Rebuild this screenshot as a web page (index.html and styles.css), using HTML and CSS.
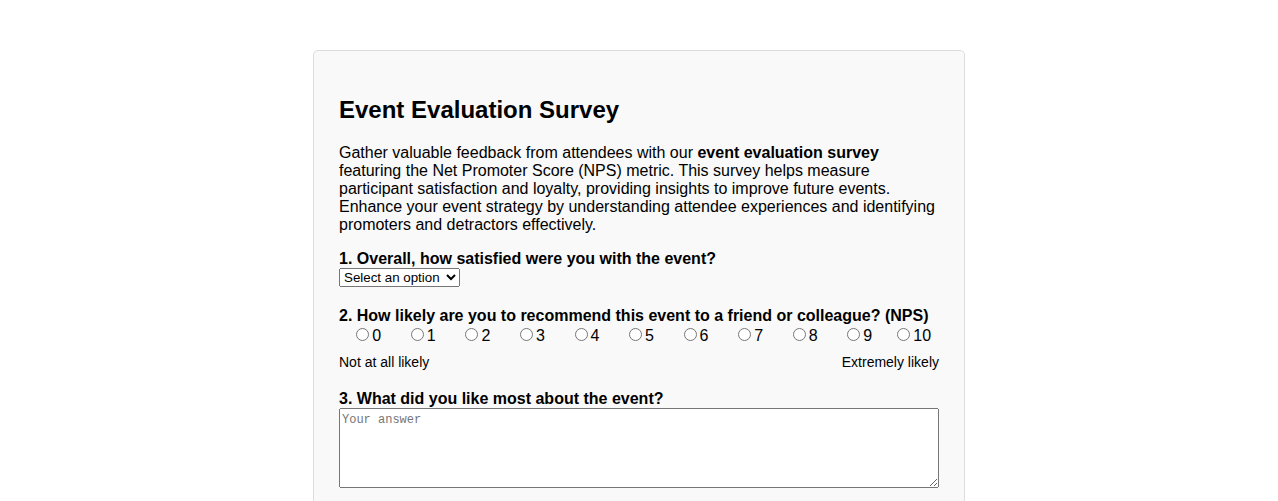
FILE: index.html
```html
<!DOCTYPE html>
<html lang="en">
<head>
<meta charset="utf-8">
<title>Event Evaluation Survey</title>
<link rel="stylesheet" href="styles.css">
</head>
<body>
<div class="container">
  <h2 class="title">Event Evaluation Survey</h2>
  <p class="intro">Gather valuable feedback from attendees with our <strong>event evaluation survey</strong> featuring the Net Promoter Score (NPS) metric. This survey helps measure participant satisfaction and loyalty, providing insights to improve future events. Enhance your event strategy by understanding attendee experiences and identifying promoters and detractors effectively.</p>
  <form>
    <div class="question">
      <label class="q-label" for="q1">1. Overall, how satisfied were you with the event?</label>
      <select id="q1" name="q1" class="q-select">
        <option>Select an option</option>
        <option>Very satisfied</option>
        <option>Satisfied</option>
        <option>Neutral</option>
        <option>Dissatisfied</option>
        <option>Very dissatisfied</option>
      </select>
    </div>
    <div class="question">
      <label class="q-label">2. How likely are you to recommend this event to a friend or colleague? (NPS)</label>
      <div class="nps">
        <label class="nps-item"><input type="radio" name="nps" value="0">0</label>
        <label class="nps-item"><input type="radio" name="nps" value="1">1</label>
        <label class="nps-item"><input type="radio" name="nps" value="2">2</label>
        <label class="nps-item"><input type="radio" name="nps" value="3">3</label>
        <label class="nps-item"><input type="radio" name="nps" value="4">4</label>
        <label class="nps-item"><input type="radio" name="nps" value="5">5</label>
        <label class="nps-item"><input type="radio" name="nps" value="6">6</label>
        <label class="nps-item"><input type="radio" name="nps" value="7">7</label>
        <label class="nps-item"><input type="radio" name="nps" value="8">8</label>
        <label class="nps-item"><input type="radio" name="nps" value="9">9</label>
        <label class="nps-item"><input type="radio" name="nps" value="10">10</label>
      </div>
      <div class="nps-scale">
        <span>Not at all likely</span>
        <span>Extremely likely</span>
      </div>
    </div>
    <div class="question">
      <label class="q-label" for="q3">3. What did you like most about the event?</label>
      <textarea id="q3" name="q3" class="q-text" placeholder="Your answer"></textarea>
    </div>
  </form>
</div>
</body>
</html>
```
FILE: styles.css
```css
html, body {
  margin: 0;
  padding: 0;
  background: #ffffff;
}

body {
  font-family: "Liberation Sans", Arial, sans-serif;
  color: #000000;
}

.container {
  width: 600px;
  margin: 50px auto 0;
  padding: 25px;
  background: #f9f9f9;
  border: 1px solid #dddddd;
  border-radius: 5px;
}

.title {
  font-size: 24px;
  font-weight: bold;
  margin: 20px 0;
}

.intro {
  font-size: 16px;
  margin: 0 0 16px;
}

.question {
  margin-bottom: 20px;
}

.q-label {
  display: block;
  font-weight: bold;
  font-size: 16px;
}

.q-select {
  font-family: "Liberation Sans", Arial, sans-serif;
  font-size: 13.33px;
  height: 19px;
  padding-right: 2px;
}

.nps {
  display: flex;
}

.nps-item {
  flex: 1;
  text-align: center;
  font-size: 16px;
}

.nps-scale {
  display: flex;
  justify-content: space-between;
  font-size: 14px;
  margin-top: 9px;
}

.q-text {
  display: block;
  width: 100%;
  height: 80px;
  box-sizing: border-box;
  font-family: "Liberation Mono", "Courier New", monospace;
  font-size: 12px;
  padding: 4px 2px 2px;
}

.q-text::placeholder {
  color: #757575;
}
```
